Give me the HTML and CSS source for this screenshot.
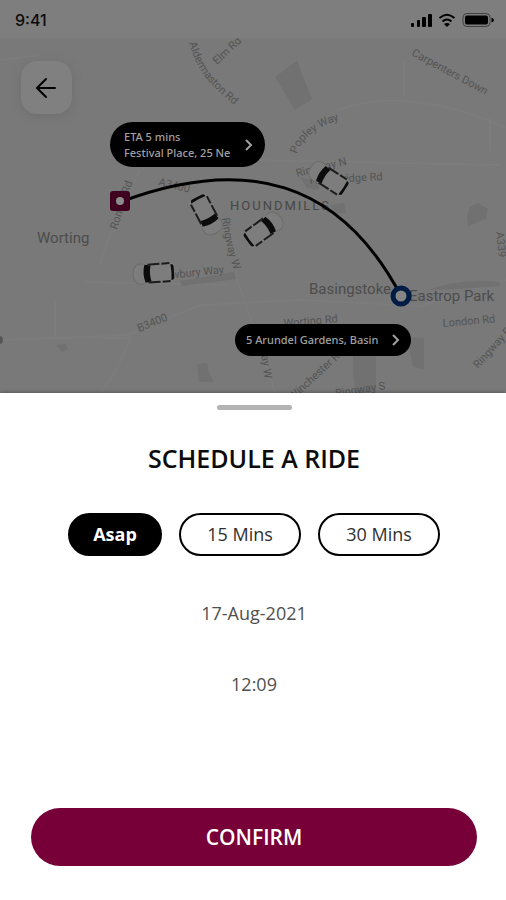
FILE: index.html
```html
<!DOCTYPE html>
<html lang="en">
<head>
<meta charset="utf-8">
<meta name="viewport" content="width=device-width, initial-scale=1">
<title>Schedule a ride</title>
<link rel="stylesheet" href="styles.css">
</head>
<body>
<main class="app">
  <section class="map" aria-label="Route map">
    <svg class="map-canvas" viewBox="0 0 506 393" preserveAspectRatio="xMidYMid slice" aria-hidden="true">
      <defs>
        <g id="car">
          <path class="hood" d="M-13 -10H-18Q-24 -8 -24 0Q-24 8 -18 10H-13"/>
          <rect class="roof" x="-14" y="-10" width="32" height="20" rx="4"/>
          <path class="glass" d="M-12 -9Q-15 0 -12 9L-6 8Q-8 0 -6 -8Z"/>
          <path class="glass" d="M14 -8Q17 -8 17 -5V5Q17 8 14 8Q15 0 14 -8Z"/>
          <path class="trim" d="M-9 -9L3 -9M5 -9L13 -9M-9 9L3 9M5 9L13 9"/>
        </g>
        <path id="aldermaston" d="M189 43Q196 66 207 79Q219 93 239 109"/>
        <path id="popley" d="M297 154Q303 131 342 119"/>
        <path id="carpenters" d="M411 55L493 99"/>
        <path id="ringwayw" d="M222 218Q225 245 237 280"/>
      </defs>

      <g class="road">
        <path d="M338 110Q410 85 506 128"/>
        <path d="M404 60V96M490 118V150"/>
        <path d="M100 265Q115 215 140 170"/>
        <path d="M55 300V338H130Q120 370 100 393"/>
        <path d="M0 340L128 335L200 305L300 300L420 306L506 280"/>
        <path d="M235 274Q262 350 275 393M255 160L500 165"/>
        <path d="M85 282L225 285M0 60L40 55"/>
      </g>
      <g class="park">
        <path d="M275 77L297 61L312 99L295 110Z"/>
        <path d="M300 177L320 182L318 190L307 188Z"/>
        <path d="M331 205L344 203L346 213L332 214Z"/>
        <path d="M470 207L478 203L488 209L486 219L468 226L467 216Z"/>
        <path d="M180 281L234 272L236 279L182 286Z"/>
        <path d="M428 290Q460 278 499 282L500 286Q465 289 428 290Z"/>
        <path d="M56 345L65 344L68 349L62 352Z"/>
        <path d="M197 364L207 363L209 373L214 382H199Z"/>
        <path d="M353 356H376V393H356L353 374Z"/>
        <path d="M407 337L424 338V369L413 367Z"/>
      </g>

      <g class="street">
        <text><textPath href="#aldermaston">Aldermaston Rd</textPath></text>
        <text transform="translate(217 65) rotate(-43)">Elm Rd</text>
        <text><textPath href="#carpenters">Carpenters Down</textPath></text>
        <text><textPath href="#popley">Popley Way</textPath></text>
        <text transform="translate(297 177) rotate(-14)">Ringway N</text>
        <text transform="translate(310 184) rotate(-3)">Houndridge Rd</text>
        <text transform="translate(158 185) rotate(14)">A3400</text>
        <text transform="translate(117 230) rotate(-72)">Roman Rd</text>
        <text><textPath href="#ringwayw">Ringway W</textPath></text>
        <text transform="translate(158 280) rotate(-6)">Newbury Way</text>
        <text transform="translate(139 332) rotate(-22)">B3400</text>
        <text transform="translate(496 232) rotate(84)">A339</text>
        <text transform="translate(443 327) rotate(-5)">London Rd</text>
        <text transform="translate(478 369) rotate(-48)">Ringway E</text>
        <text transform="translate(284 327) rotate(-5)">Worting Rd</text>
        <text transform="translate(260 346) rotate(82)">Way W</text>
        <text transform="translate(293 401) rotate(-43)">Winchester Rd</text>
        <text transform="translate(336 397) rotate(-9)">Ringway S</text>
      </g>
      <g class="place">
        <text x="37" y="243">Worting</text>
        <text x="309" y="294">Basingstoke</text>
        <text x="409" y="301">Eastrop Park</text>
      </g>
      <text class="district" x="230" y="210">HOUNDMILLS</text>
      <circle class="dot" cx="-1" cy="340" r="4"/>

      <use href="#car" transform="translate(157 273) rotate(-4)"/>
      <use href="#car" transform="translate(205 212) rotate(242)"/>
      <use href="#car" transform="translate(261 231) rotate(144)"/>
      <use href="#car" transform="translate(331 180) rotate(33)"/>

      <path class="route" d="M120 202C245 155 340 180 401 296"/>
      <rect class="start" x="110" y="191" width="20" height="20" rx="3"/>
      <circle class="start-dot" cx="120" cy="201" r="4"/>
      <circle class="end" cx="401" cy="296" r="8"/>
    </svg>

    <header class="status">
      <span class="clock">9:41</span>
      <svg class="status-icons" viewBox="0 0 84 16" aria-hidden="true">
        <rect x="1" y="11" width="3" height="4" rx="1"/>
        <rect x="7" y="8" width="3" height="7" rx="1"/>
        <rect x="12" y="5" width="4" height="10" rx="1"/>
        <rect x="18" y="2" width="4" height="13" rx="1"/>
        <path class="wave" d="M29.500 6Q37 -.5 44.500 6M32.500 9.500Q37 5.500 41.500 9.500"/>
        <path d="M34 12Q37 9.800 40 12L37 15Z"/>
        <rect class="battery" x="53" y="1.500" width="27" height="13" rx="4"/>
        <rect x="55" y="3.500" width="23" height="9" rx="2"/>
        <path d="M81.500 5.500Q84 6.500 84 8Q84 9.500 81.500 10.500Z"/>
      </svg>
    </header>

    <button class="back" type="button" aria-label="Back">
      <svg viewBox="0 0 24 24" aria-hidden="true"><path d="M20 12H2M11 3L2 12L11 21"/></svg>
    </button>

    <button class="stop stop-start" type="button">
      <span>ETA 5 mins<br>Festival Place, 25 Ne</span>
      <svg viewBox="0 0 8 14" aria-hidden="true"><path d="M1 2L6 7L1 12"/></svg>
    </button>
    <button class="stop stop-end" type="button">
      <span>5 Arundel Gardens, Basin</span>
      <svg viewBox="0 0 8 14" aria-hidden="true"><path d="M1 2L6 7L1 12"/></svg>
    </button>
  </section>

  <section class="sheet" aria-labelledby="sheet-title">
    <div class="handle"></div>
    <h1 id="sheet-title">SCHEDULE A RIDE</h1>
    <div class="chips" role="group" aria-label="Pickup time">
      <button class="chip chip-on" type="button" aria-pressed="true">Asap</button>
      <button class="chip" type="button" aria-pressed="false">15 Mins</button>
      <button class="chip" type="button" aria-pressed="false">30 Mins</button>
    </div>
    <time class="when" datetime="2021-08-17">17-Aug-2021</time>
    <time class="when" datetime="12:09">12:09</time>
    <button class="confirm" type="button">CONFIRM</button>
  </section>
</main>
</body>
</html>
```

FILE: styles.css
```css
* {
  box-sizing: border-box;
}

body {
  margin: 0;
  font-family: "Open Sans", "Noto Sans", sans-serif;
  background: #fff;
}

button {
  margin: 0;
  border: 0;
  font: inherit;
  cursor: pointer;
}

.app {
  display: flex;
  flex-direction: column;
  min-height: 100vh;
}

/* Map */

.map {
  position: relative;
  flex: 1 0 auto;
  min-height: 360px;
  overflow: hidden;
  background: #797979;
}

.map-canvas {
  position: absolute;
  inset: 0;
  width: 100%;
  height: 100%;
  font-family: Roboto, sans-serif;
}

.road {
  fill: none;
  stroke: #7c7c7c;
  stroke-width: 2;
}

.park {
  fill: #717171;
}

.street {
  fill: #545454;
  font-size: 11px;
}

.place {
  fill: #4c4c4c;
  font-size: 15px;
}

.district {
  fill: #474747;
  font-size: 13px;
  letter-spacing: 2px;
}

.dot {
  fill: #555;
}

.hood {
  fill: #7d7d7d;
  stroke: #6c6c6c;
}

.roof {
  fill: #7d7d7d;
}

.glass {
  fill: #0c0c0c;
}

.trim {
  fill: none;
  stroke: #1c1c1c;
  stroke-width: 2;
}

.route {
  fill: none;
  stroke: #000;
  stroke-width: 3;
}

.start {
  fill: #40001f;
}

.start-dot {
  fill: #8c8c8c;
}

.end {
  fill: #858585;
  stroke: #001c44;
  stroke-width: 5;
}

.status {
  position: relative;
  display: flex;
  align-items: center;
  justify-content: space-between;
  height: 38px;
  padding: 2px 12px 0 15px;
  background: #7e7e7e;
}

.clock {
  font: 500 16px/20px Inter, sans-serif;
  color: #0c0c0c;
}

.status-icons {
  width: 84px;
  height: 16px;
}

.wave {
  fill: none;
  stroke: #000;
  stroke-width: 2;
}

.battery {
  fill: none;
  stroke: #404040;
}

.back {
  position: relative;
  display: grid;
  place-items: center;
  width: 51px;
  height: 53px;
  margin: 23px 0 0 21px;
  padding: 0;
  border-radius: 16px;
  background: #808080;
  box-shadow: 0 2px 8px #6668;
}

.back svg {
  width: 24px;
  height: 24px;
  fill: none;
  stroke: #000;
  stroke-width: 2;
  stroke-linecap: round;
  stroke-linejoin: round;
}

.stop {
  position: absolute;
  display: flex;
  align-items: center;
  justify-content: space-between;
  border-radius: 24px;
  background: #000;
  color: #a0a0a0;
  font: 500 11px/16px "Noto Sans", sans-serif;
  text-align: left;
  white-space: nowrap;
}

.stop svg {
  flex: none;
  width: 8px;
  height: 14px;
  fill: none;
  stroke: #a0a0a0;
  stroke-width: 2;
}

.stop-start {
  left: calc(50% - 143px);
  top: 122px;
  width: 155px;
  height: 45px;
  padding: 0 12px 0 14px;
}

.stop-end {
  left: calc(50% - 18px);
  top: 324px;
  width: 176px;
  height: 32px;
  padding: 0 11px;
}

/* Sheet */

.sheet {
  position: relative;
  display: flex;
  flex-direction: column;
  align-items: center;
  padding: 12px 29px 34px 31px;
  background: #fff;
  box-shadow: 0 0 4px #0006;
}

.handle {
  width: 75px;
  height: 5px;
  border-radius: 3px;
  background: #b3b3b3;
}

h1 {
  margin: 32px 0 39px;
  font-size: 25px;
  font-weight: 600;
  line-height: 32px;
  color: #0c0c0c;
}

.chips {
  display: flex;
  gap: 17px;
}

.chip {
  height: 43px;
  min-width: 122px;
  padding: 0 24px 2px;
  border: 2px solid #000;
  border-radius: 22px;
  background: #fff;
  color: #303030;
  font-size: 18px;
  line-height: 24px;
}

.chip-on {
  min-width: 94px;
  padding: 0 20px 2px;
  background: #000;
  color: #fff;
  font-weight: 700;
}

.when {
  margin-top: 44px;
  font-size: 18px;
  line-height: 27px;
  color: #505050;
}

.confirm {
  width: 100%;
  height: 58px;
  margin-top: 110px;
  border-radius: 29px;
  background: #780038;
  color: #fff;
  font-size: 21px;
  font-weight: 600;
}
```
